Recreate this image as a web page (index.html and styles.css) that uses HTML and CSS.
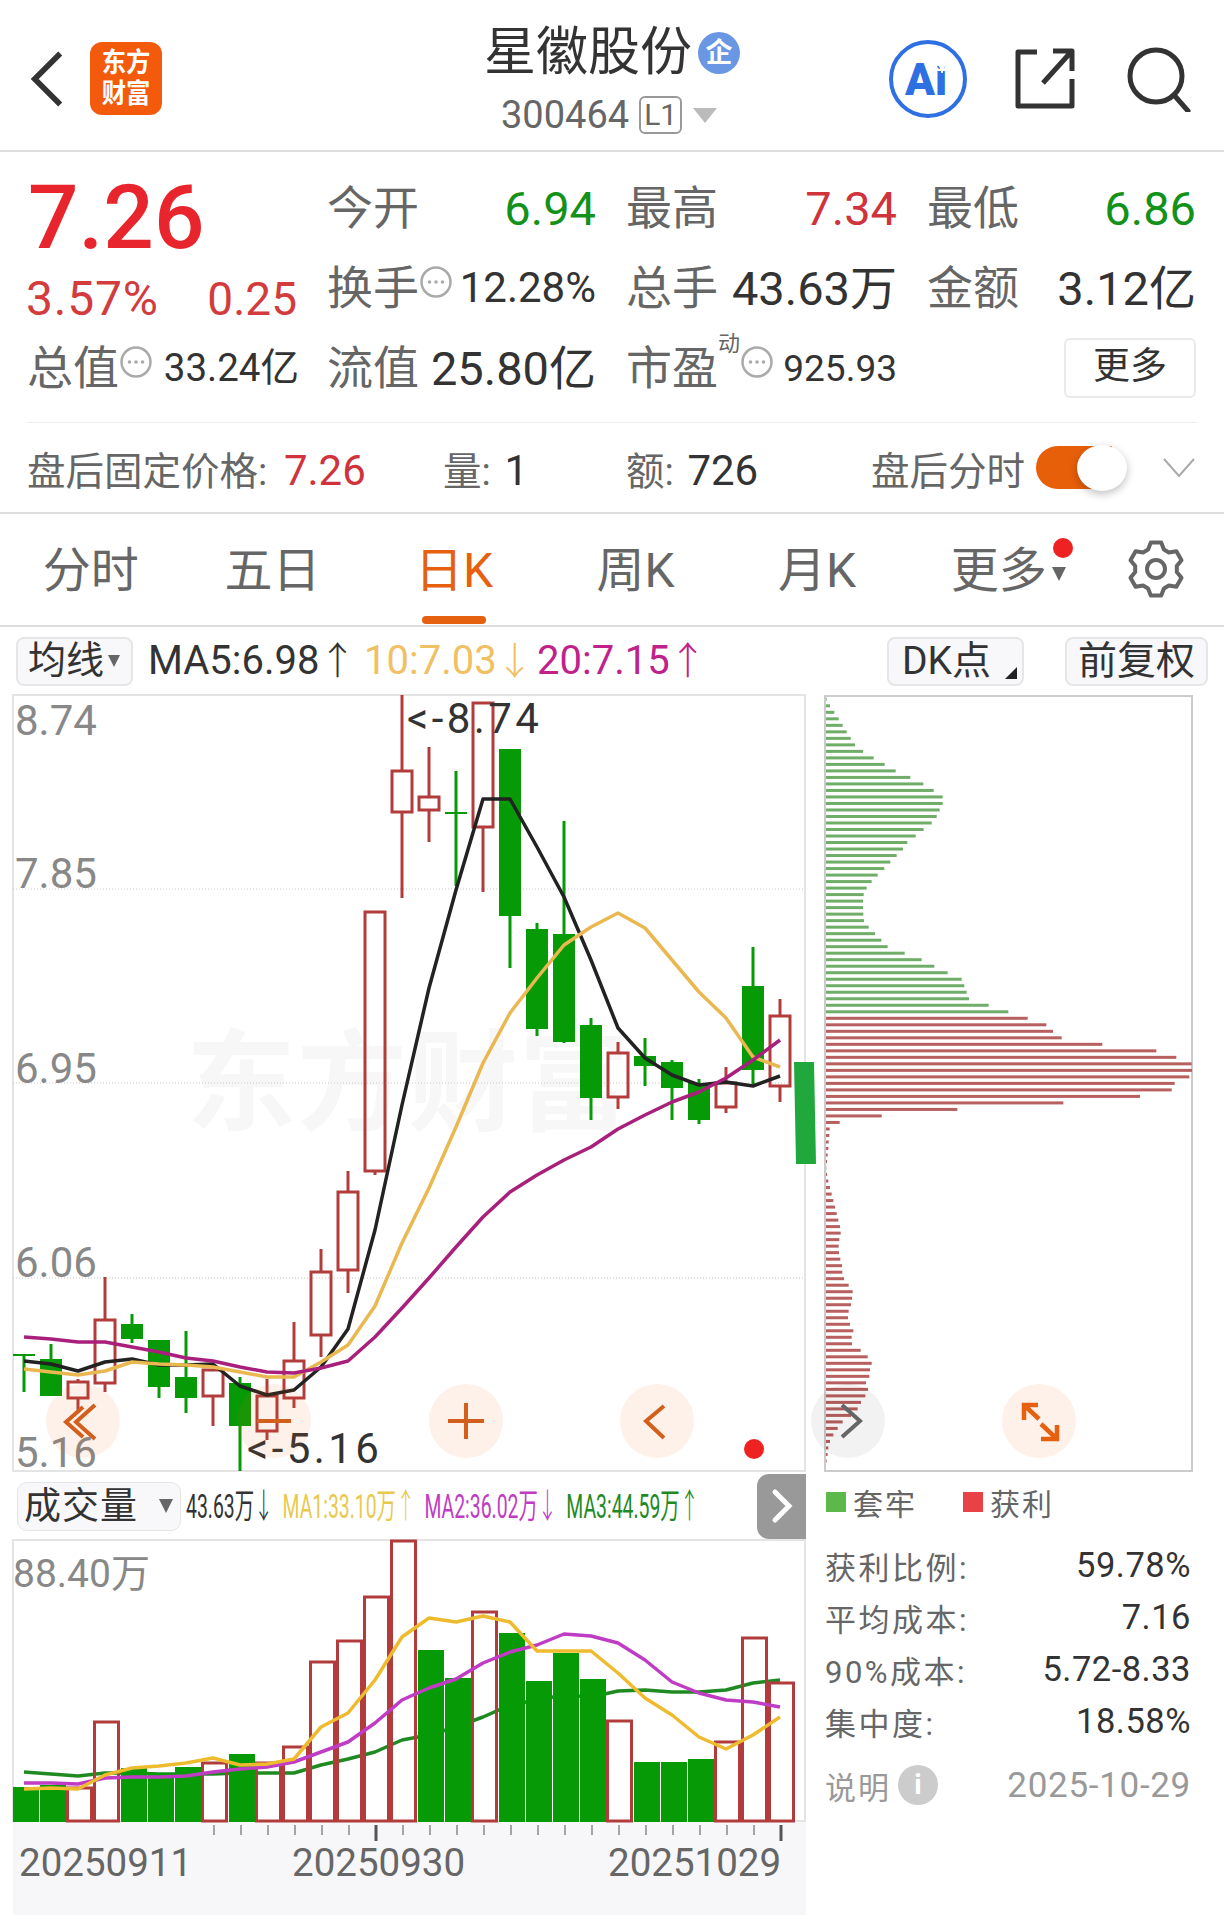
FILE: index.html
```html
<!DOCTYPE html>
<html lang="zh-CN">
<head>
    <meta charset="utf-8">
    <title>星徽股份 300464</title>
    <link rel="stylesheet" href="styles.css">
</head>
<body>
    <header class="topbar">
        <svg class="back" viewBox="0 0 36 60"><path d="M32 3 L5 30 L32 57"/></svg>
        <div class="logo"><span>东方</span><span>财富</span></div>
        <div class="title">
            <div class="name">星徽股份<span class="badge">企</span></div>
            <div class="code">300464<span class="level">L1</span><i class="caret"></i></div>
        </div>
        <svg class="ai" viewBox="0 0 80 80">
            <circle cx="40" cy="40" r="37"/>
            <text x="38" y="56">Ai</text>
            <path class="spark" d="M54 15 L56.5 22 L63 24.5 L56.5 27 L54 34 L51.500 27 L45 24.5 L51.500 22 Z"/>
        </svg>
        <svg class="share" viewBox="0 0 62 64"><path d="M24 5 H5 V59 H59 V32"/><path d="M30 36 L58 5 M40 4 H59 V24"/></svg>
        <svg class="search" viewBox="0 0 66 66"><circle cx="31" cy="30" r="26"/><path d="M49 49 L63 65"/></svg>
    </header>

    <section class="quote">
        <div class="price-box">
            <div class="price">7.26</div>
            <div class="change"><span class="pct">3.57%</span><span>0.25</span></div>
        </div>
        <div class="cell"><span class="lbl">今开</span><span class="val down">6.94</span></div>
        <div class="cell"><span class="lbl">最高</span><span class="val up">7.34</span></div>
        <div class="cell"><span class="lbl">最低</span><span class="val down">6.86</span></div>

        <div class="cell"><span class="lbl">换手<svg class="tip" viewBox="0 0 32 32"><use href="#tip"/></svg></span><span class="val wide">12.28%</span></div>
        <div class="cell"><span class="lbl">总手</span><span class="val">43.63万</span></div>
        <div class="cell"><span class="lbl">金额</span><span class="val">3.12亿</span></div>

        <div class="cell"><span class="lbl">总值<svg class="tip" viewBox="0 0 32 32"><use href="#tip"/></svg></span><span class="val small">33.24亿</span></div>
        <div class="cell"><span class="lbl">流值</span><span class="val">25.80亿</span></div>
        <div class="cell"><span class="lbl">市盈<sup>动</sup><svg class="tip" viewBox="0 0 32 32"><use href="#tip"/></svg></span><span class="val tight">925.93</span></div>
        <div class="cell"><span class="more-btn">更多</span></div>
    </section>

    <svg class="defs" width="0" height="0">
        <symbol id="tip" viewBox="0 0 32 32">
            <circle cx="16" cy="16" r="14.500" fill="none" stroke="#aaa" stroke-width="2.500"/>
            <circle cx="9.500" cy="16" r="1.800" fill="#aaa"/>
            <circle cx="16" cy="16" r="1.800" fill="#aaa"/>
            <circle cx="22.500" cy="16" r="1.800" fill="#aaa"/>
        </symbol>
    </svg>

    <section class="after">
        <div class="after-item">盘后固定价格: <b class="up">7.26</b></div>
        <div class="after-item">量: <b>1</b></div>
        <div class="after-item">额: <b>726</b></div>
        <div class="after-item after-switch">
            盘后分时
            <span class="toggle"></span>
            <svg class="fold" viewBox="0 0 32 20"><path d="M1 1 L16 18 L31 1"/></svg>
        </div>
    </section>

    <nav class="tabs">
        <a>分时</a>
        <a>五日</a>
        <a class="active">日K</a>
        <a>周K</a>
        <a>月K</a>
        <a class="more">更多<i class="caret dark"></i><i class="dot"></i></a>
        <svg class="gear" viewBox="0 0 56 60"><path id="gearPath"/><circle cx="28" cy="30" r="9"/></svg>
    </nav>

    <div class="ma-bar">
        <span class="pick ma-pick">均线<i class="caret dark small"></i></span>
        <span class="ma black">MA5:6.98<em>↑</em></span>
        <span class="ma yellow">10:7.03<em>↓</em></span>
        <span class="ma pink">20:7.15<em>↑</em></span>
        <span class="pick dk">DK点<i class="corner"></i></span>
        <span class="pick adj">前复权</span>
    </div>

    <main class="charts">
        <div class="col-left">
            <svg id="kline" class="kline" width="793" height="777" viewBox="13 695 793 777"></svg>
            <div class="vol-bar">
                <span class="pick vol-pick">成交量<i class="caret dark"></i></span>
                <div class="vol-ma">
                    <span class="black">43.63万<em>↓</em></span>
                    <span class="gold">MA1:33.10万<em>↑</em></span>
                    <span class="violet">MA2:36.02万<em>↓</em></span>
                    <span class="green">MA3:44.59万<em>↑</em></span>
                </div>
                <span class="next"><svg viewBox="0 0 24 36"><path d="M5 4 L19 18 L5 32"/></svg></span>
            </div>
            <svg id="volume" class="volume" width="793" height="282" viewBox="13 1540 793 282"></svg>
            <div class="dates">
                <svg id="ticks" class="ticks" width="793" height="19" viewBox="13 1822 793 19"></svg>
                <div class="date-row"><span>20250911</span><span>20250930</span><span>20251029</span></div>
            </div>
        </div>

        <aside class="col-right">
            <svg id="chips" class="chips" width="369" height="777" viewBox="824 695 369 777"></svg>
            <div class="legend">
                <span><i class="sq trapped"></i>套牢</span>
                <span><i class="sq profit"></i>获利</span>
            </div>
            <dl class="stats">
                <div><dt>获利比例:</dt><dd>59.78%</dd></div>
                <div><dt>平均成本:</dt><dd>7.16</dd></div>
                <div><dt>90%成本:</dt><dd>5.72-8.33</dd></div>
                <div><dt>集中度:</dt><dd>18.58%</dd></div>
            </dl>
            <div class="note">
                <span class="note-lbl">说明<i class="info">i</i></span>
                <span>2025-10-29</span>
            </div>
        </aside>

        <div class="float-btns">
            <button><svg viewBox="0 0 74 74"><path d="M37 23 L20 38 L37 53 M49 21 L30 38 L49 55"/></svg></button>
            <button><svg viewBox="0 0 74 74"><path d="M20 37 H54"/></svg></button>
            <button><svg viewBox="0 0 74 74"><path d="M19 37 H55 M37 19 V55"/></svg></button>
            <button><svg viewBox="0 0 74 74"><path d="M44 22 L26 37 L44 54"/></svg></button>
            <button class="grey"><svg viewBox="0 0 74 74"><path d="M31 21 L49 37 L31 53"/></svg></button>
            <button class="bold"><svg viewBox="0 0 74 74"><path d="M36 21 H22 V36 M23 22 L37 35 M39 40 L55 55 M39 55 H55 V41"/></svg></button>
        </div>
    </main>

    <script src="chart.js"></script>
</body>
</html>
```

FILE: styles.css
```css
* {
    box-sizing: border-box;
}
body {
    margin: 0;
    width: 1224px;
    background: #fff;
    color: #333;
    font-family: Roboto, "Noto Sans CJK SC", sans-serif;
}
svg {
    display: block;
}
i, em {
    font-style: normal;
}

/* top bar */
.topbar {
    display: flex;
    align-items: center;
    height: 152px;
    border-bottom: 2px solid #ddd;
    padding: 7px 0 0 30px;
    position: relative;
}
.back {
    width: 34px;
    height: 58px;
    fill: none;
    stroke: #333;
    stroke-width: 6;
}
.logo {
    width: 72px;
    height: 73px;
    margin-left: 26px;
    border-radius: 12px;
    background: #f45a0c;
    color: #fff;
    font-size: 27px;
    font-weight: 700;
    line-height: 31px;
    display: flex;
    flex-direction: column;
    align-items: center;
    justify-content: center;
}
.logo span {
    transform: scaleX(.9);
}
.title {
    width: 300px;
    margin-left: 322px;
    margin-right: 104px;
    color: #333;
}
.name {
    display: flex;
    align-items: center;
    font-size: 52px;
    line-height: 62px;
    color: #333;
}
.badge {
    width: 42px;
    height: 42px;
    margin-left: 6px;
    border-radius: 50%;
    background: #6a97e4;
    color: #fff;
    font-size: 27px;
    font-weight: 700;
    line-height: 42px;
    text-align: center;
}
.code {
    display: flex;
    align-items: center;
    margin-top: 11px;
    margin-left: 17px;
    font-size: 38px;
    line-height: 40px;
    color: #666;
}
.level {
    margin-left: 10px;
    width: 43px;
    height: 38px;
    border: 2px solid #999;
    border-radius: 6px;
    font-size: 30px;
    line-height: 34px;
    text-align: center;
}
.caret {
    display: inline-block;
    margin-left: 11px;
    border-left: 12px solid transparent;
    border-right: 12px solid transparent;
    border-top: 15px solid #bbb;
}
.caret.dark {
    margin-left: 8px;
    border-left-width: 7px;
    border-right-width: 7px;
    border-top: 14px solid #666;
}
.caret.small {
    margin-left: 4px;
    border-left-width: 6px;
    border-right-width: 6px;
    border-top-width: 12px;
}
.ai {
    width: 80px;
    height: 80px;
    margin-right: 45px;
}
.ai circle {
    fill: none;
    stroke: #2e6fe2;
    stroke-width: 4;
}
.ai text {
    fill: #2e6fe2;
    font-size: 44px;
    font-weight: 900;
    text-anchor: middle;
}
.ai .spark {
    fill: #fff;
    stroke: #fff;
}
.share {
    width: 62px;
    height: 64px;
    margin-right: 50px;
    fill: none;
    stroke: #333;
    stroke-width: 5;
    stroke-linejoin: round;
}
.search {
    width: 66px;
    height: 66px;
    fill: none;
    stroke: #333;
    stroke-width: 5;
    stroke-linecap: round;
}

/* quote table */
.quote {
    display: grid;
    grid-template-columns: 270px 269px 271px 269px;
    grid-auto-rows: 80px;
    column-gap: 30px;
    margin: 0 27px;
    padding: 16px 0 14px;
    border-bottom: 1px solid #eee;
    height: 271px;
}
.price-box {
    grid-row: span 2;
    padding-left: 1px;
}
.price {
    font-size: 89px;
    font-weight: 500;
    line-height: 100px;
    color: #e8242c;
}
.change {
    display: flex;
    justify-content: space-between;
    font-size: 46px;
    line-height: 64px;
    margin-top: -1px;
    color: #d23c3c;
}
.pct {
    margin-left: -2px;
    font-size: 48px;
    letter-spacing: .8px;
}
.cell {
    display: flex;
    align-items: center;
    justify-content: space-between;
}
.lbl {
    display: flex;
    align-items: center;
    margin-top: -8px;
    font-size: 46px;
    color: #666;
    position: relative;
}
.lbl sup {
    font-size: 22px;
    line-height: 1;
    align-self: flex-start;
    margin-top: 2px;
}
.tip {
    width: 32px;
    height: 32px;
    margin-left: 1px;
    margin-top: -4px;
}
.val {
    font-size: 47px;
    line-height: 1;
    color: #333;
    white-space: nowrap;
}
.val.wide {
    font-size: 42px;
}
.val.small {
    margin-right: -2px;
    font-size: 38.500px;
}
.val.tight {
    font-size: 37px;
}
.val.up, .up {
    color: #d0333c;
}
.val.down {
    color: #12921a;
}
.more-btn {
    margin-left: auto;
    width: 132px;
    height: 60px;
    border: 2px solid #eaeaea;
    border-radius: 6px;
    font-size: 37px;
    line-height: 54px;
    text-align: center;
}

/* after-hours row */
.after {
    display: grid;
    grid-template-columns: 416px 183px 245px 1fr;
    align-items: center;
    height: 91px;
    padding-left: 27px;
    border-bottom: 2px solid #ddd;
    font-size: 38.500px;
    color: #666;
}
.after-item b {
    margin-left: 4px;
    font-weight: 400;
    font-size: 42px;
    color: #333;
}
.after-item b.up {
    margin-left: 7px;
    color: #d0333c;
}
.after-switch {
    display: flex;
    align-items: center;
}
.toggle {
    position: relative;
    width: 76px;
    height: 43px;
    margin-left: 11px;
    border-radius: 22px 0 0 22px;
    background: #e85f0a;
}
.toggle::after {
    content: "";
    position: absolute;
    left: 41px;
    top: -1px;
    width: 50px;
    height: 46px;
    border-radius: 50%;
    background: #fff;
    box-shadow: 0 3px 8px rgba(0, 0, 0, .25);
}
.fold {
    width: 32px;
    height: 20px;
    margin-left: 51px;
    fill: none;
    stroke: #aaa;
    stroke-width: 2;
}

/* period tabs */
.tabs {
    display: grid;
    grid-template-columns: repeat(6, 181.600px) 1fr;
    align-items: center;
    height: 113px;
    padding-top: 2px;
    border-bottom: 2px solid #ddd;
    font-size: 48px;
    color: #666;
    text-align: center;
}
.tabs a {
    position: relative;
    line-height: 60px;
}
.tabs .active {
    color: #e5610f;
}
.tabs .active::after {
    content: "";
    position: absolute;
    left: 59px;
    bottom: -23px;
    width: 64px;
    height: 8px;
    border-radius: 4px;
    background: #e5610f;
}
.tabs .more .caret {
    position: absolute;
    top: 26px;
    left: 144px;
    margin: 0;
}
.tabs .dot {
    position: absolute;
    left: 145px;
    top: -3px;
    width: 20px;
    height: 20px;
    border-radius: 50%;
    background: #ee2222;
}
.gear {
    width: 56px;
    height: 60px;
    margin-left: 38px;
    margin-top: -4px;
    fill: none;
    stroke: #666;
    stroke-width: 4;
    stroke-linejoin: round;
}

/* moving average bar */
.ma-bar {
    display: flex;
    align-items: center;
    height: 68px;
    padding: 0 16px;
    font-size: 40px;
    white-space: nowrap;
}
.pick {
    display: flex;
    align-items: center;
    position: relative;
    height: 49px;
    padding: 0 12px 9px;
    border: 2px solid #e6e6e8;
    border-radius: 8px;
    background: #f8f8fa;
    font-size: 39px;
    color: #333;
}
.ma-pick {
    width: 117px;
    padding-left: 10px;
    padding-right: 0;
    font-size: 38px;
}
.ma-pick .caret {
    margin-top: 8px;
}
.ma {
    margin-left: 15px;
    margin-top: -8px;
}
.ma em {
    font-family: "Noto Sans CJK SC", sans-serif;
    font-size: 38px;
    font-weight: 300;
    margin-left: -1px;
}
.ma.black {
    width: 201px;
}
.ma.yellow {
    width: 158px;
}
.black {
    color: #333;
}
.yellow {
    color: #f0c064;
}
.pink {
    color: #c0228a;
}
.dk {
    margin-left: auto;
    width: 137px;
    padding-left: 13px;
    padding-right: 0;
}
.corner {
    position: absolute;
    right: 5px;
    bottom: 5px;
    border-left: 12px solid transparent;
    border-bottom: 12px solid #222;
}
.adj {
    margin-left: 41px;
    width: 143px;
    padding-left: 11px;
    padding-right: 0;
}

/* chart columns */
.charts {
    position: relative;
    display: grid;
    grid-template-columns: 793px 369px;
    column-gap: 18px;
    padding-left: 13px;
}
.kline, .volume, .chips {
    overflow: visible;
}
.vol-bar {
    display: flex;
    align-items: center;
    height: 68px;
    font-size: 34px;
    white-space: nowrap;
}
.vol-pick {
    width: 164px;
    margin-left: 4px;
    padding: 0 7px 6px 6px;
    border-width: 1.500px;
    border-radius: 10px;
    font-size: 37px;
    letter-spacing: 1px;
    justify-content: space-between;
}
.vol-pick .caret {
    margin-left: 0;
    margin-top: 6px;
}
.vol-ma {
    display: flex;
    gap: 16px;
    width: 509px;
    margin-left: 5px;
    margin-top: -6px;
    transform: scaleX(.57);
    transform-origin: 0 50%;
}
.vol-ma em {
    font-family: "Noto Sans CJK SC", sans-serif;
    font-weight: 300;
}
.gold {
    color: #e8c94e;
}
.violet {
    color: #c03cc4;
}
.green {
    color: #1f8a22;
}
.next {
    margin-left: auto;
    width: 49px;
    height: 65px;
    border-radius: 12px 0 0 12px;
    background: #999;
    display: flex;
    align-items: center;
    justify-content: center;
}
.next svg {
    width: 24px;
    height: 36px;
    fill: none;
    stroke: #fff;
    stroke-width: 5;
    stroke-linecap: round;
}
.dates {
    height: 93px;
    background: #f7f7f9;
}
.date-row {
    display: grid;
    grid-template-columns: 273px 316px auto;
    padding-left: 6px;
    font-size: 38.500px;
    line-height: 44px;
    color: #666;
}

/* chip distribution column */
.legend {
    display: flex;
    gap: 46px;
    height: 60px;
    align-items: center;
    padding-left: 2px;
    font-size: 30px;
    letter-spacing: 2px;
    color: #666;
}
.legend span {
    display: flex;
    align-items: center;
}
.sq {
    width: 20px;
    height: 20px;
    margin-right: 7px;
}
.trapped {
    background: #5cb84a;
}
.profit {
    background: #e84246;
}
.stats {
    margin: 7px 2px 0 1px;
}
.stats div {
    display: flex;
    justify-content: space-between;
    align-items: center;
    height: 52px;
}
.stats dt {
    font-size: 31px;
    letter-spacing: 2.500px;
    color: #666;
}
.stats dd {
    margin: 0;
    font-size: 34.500px;
    letter-spacing: .5px;
    color: #333;
}
.note {
    display: flex;
    justify-content: space-between;
    align-items: center;
    height: 56px;
    margin: 10px 2px 0 1px;
    font-size: 35px;
    letter-spacing: .7px;
    color: #999;
}
.note-lbl {
    display: flex;
    align-items: center;
    font-size: 31px;
    letter-spacing: 2px;
}
.info {
    width: 40px;
    height: 40px;
    margin-left: 7px;
    border-radius: 50%;
    background: #ccc;
    color: #fff;
    font-size: 28px;
    font-weight: 700;
    line-height: 40px;
    text-align: center;
    letter-spacing: 0;
}

/* round buttons floating over the charts */
.float-btns {
    position: absolute;
    left: 46px;
    top: 689px;
    display: flex;
    gap: 117.300px;
}
.float-btns button {
    width: 74px;
    height: 74px;
    padding: 0;
    border: 0;
    border-radius: 50%;
    background: rgba(232, 95, 16, .09);
}
.float-btns svg {
    width: 74px;
    height: 74px;
    fill: none;
    stroke: #d2601c;
    stroke-width: 4;
}
.float-btns .grey {
    background: rgba(0, 0, 0, .05);
}
.float-btns .grey svg {
    stroke: #666;
}
.float-btns .bold svg {
    stroke: #e5610f;
    stroke-width: 4.500;
}
```

FILE: chart.js
```js
const NS = 'http://www.w3.org/2000/svg';
const RED = '#b23c3c';
const GREEN = '#069a06';

function add(parent, tag, attrs, text) {
    const node = document.createElementNS(NS, tag);
    for (const key in attrs) node.setAttribute(key, attrs[key]);
    if (text) node.textContent = text;
    parent.appendChild(node);
    return node;
}

function line(parent, x1, y1, x2, y2, stroke, width, extra) {
    return add(parent, 'line', Object.assign({ x1, y1, x2, y2, stroke, 'stroke-width': width }, extra));
}

function poly(parent, pts, stroke, width) {
    add(parent, 'polyline', {
        points: pts.map(p => p.join(',')).join(' '),
        fill: 'none',
        stroke,
        'stroke-width': width,
        'stroke-linejoin': 'round'
    });
}

// candles: [body top, body bottom, wick top, wick bottom, up?]
const candles = [
    [1354, 1356, 1354, 1392, 0], [1359, 1396, 1344, 1396, 0], [1382, 1398, 1379, 1413, 1],
    [1320, 1383, 1277, 1392, 1], [1324, 1339, 1314, 1343, 0], [1340, 1387, 1340, 1398, 0],
    [1377, 1398, 1331, 1413, 0], [1370, 1396, 1370, 1426, 1], [1383, 1426, 1377, 1471, 0],
    [1396, 1431, 1379, 1440, 1], [1361, 1398, 1322, 1408, 1], [1272, 1335, 1249, 1357, 1],
    [1192, 1270, 1171, 1293, 1], [912, 1171, 912, 1175, 1], [771, 812, 695, 898, 1],
    [797, 810, 747, 842, 1], [812, 814, 771, 886, 0], [703, 827, 702, 892, 1],
    [749, 916, 749, 968, 0], [929, 1029, 923, 1036, 0], [934, 1042, 821, 1043, 0],
    [1025, 1098, 1018, 1120, 0], [1053, 1097, 1042, 1109, 1], [1056, 1066, 1038, 1086, 0],
    [1062, 1088, 1060, 1120, 0], [1083, 1120, 1079, 1124, 0], [1083, 1107, 1067, 1113, 1],
    [986, 1070, 947, 1084, 0], [1016, 1086, 999, 1102, 1]
];

const ma5 = [1361, 1364, 1371, 1362, 1359, 1365, 1365, 1364, 1386, 1395, 1390, 1367, 1329, 1230, 1105, 988, 890, 799, 799, 847, 897, 960, 1028, 1058, 1075, 1085, 1082, 1086, 1076];
const ma10 = [1369, 1372, 1375, 1371, 1362, 1364, 1365, 1367, 1372, 1377, 1377, 1362, 1345, 1306, 1243, 1188, 1127, 1063, 1013, 978, 945, 927, 913, 928, 960, 992, 1018, 1057, 1067];
const ma20 = [1337, 1339, 1342, 1342, 1347, 1352, 1358, 1361, 1367, 1372, 1373, 1368, 1361, 1337, 1308, 1278, 1247, 1217, 1192, 1175, 1160, 1147, 1129, 1115, 1102, 1092, 1078, 1060, 1040];

function drawKline(svg) {
    add(svg, 'rect', { x: 13, y: 695, width: 792, height: 776, fill: 'none', stroke: '#e4e4e4', 'stroke-width': 2 });

    // faint brand mark behind the candles
    add(svg, 'text', { x: 186, y: 1122, 'font-size': 110, 'font-weight': 700, fill: '#f7f7f7', 'letter-spacing': 1 }, '东方财富');

    [889, 1083, 1278].forEach(y => line(svg, 13, y, 805, y, '#c8c8c8', 1, { 'stroke-dasharray': '1 2' }));

    candles.forEach((c, i) => {
        const x = 24 + 27 * i;
        const color = c[4] ? RED : GREEN;
        if (c[2] < c[0]) line(svg, x, c[2], x, c[0], color, 3);
        if (c[3] > c[1]) line(svg, x, c[1], x, c[3], color, 3);
        if (c[4]) {
            add(svg, 'rect', { x: x - 10, y: c[0], width: 20, height: c[1] - c[0], fill: 'none', stroke: color, 'stroke-width': 3 });
        } else {
            add(svg, 'rect', { x: x - 11, y: c[0], width: 22, height: c[1] - c[0], fill: color });
        }
    });

    // today's unfinished candle leans out past the frame
    add(svg, 'polygon', { points: '794,1062 814,1062 816,1164 796,1164', fill: '#21a83c' });

    const pts = list => list.map((y, i) => [24 + 27 * i, y]);
    poly(svg, pts(ma5), '#222', 3.5);
    poly(svg, pts(ma10), '#eab850', 3.5);
    poly(svg, pts(ma20), '#a8207c', 3.5);

    const axis = { 'font-size': 42, fill: '#888' };
    [['8.74', 735], ['7.85', 888], ['6.95', 1083], ['6.06', 1277], ['5.16', 1467]].forEach(([t, y]) => {
        add(svg, 'text', Object.assign({ x: 15, y }, axis), t);
    });
    const mark = { 'font-size': 42, fill: '#333', 'letter-spacing': 3.4 };
    add(svg, 'text', Object.assign({ x: 407, y: 733 }, mark), '<-8.74');
    add(svg, 'text', Object.assign({ x: 247, y: 1463 }, mark), '<-5.16');

    add(svg, 'circle', { cx: 754, cy: 1449, r: 10, fill: '#ee2222' });
}

// volume bars: [top, up?]
const volumes = [
    [1787, 0], [1785, 0], [1788, 1], [1722, 1], [1768, 0], [1773, 0], [1767, 0], [1763, 1],
    [1754, 0], [1763, 1], [1747, 1], [1662, 1], [1641, 1], [1597, 1], [1541, 1], [1650, 0],
    [1678, 0], [1612, 1], [1633, 0], [1681, 0], [1653, 0], [1679, 0], [1721, 1], [1762, 0],
    [1762, 0], [1759, 0], [1742, 1], [1638, 1], [1683, 1]
];

const vma1 = [1789, 1788, 1789, 1775, 1768, 1766, 1763, 1758, 1765, 1764, 1759, 1727, 1713, 1680, 1637, 1618, 1622, 1616, 1622, 1651, 1651, 1651, 1673, 1698, 1715, 1737, 1749, 1735, 1717];
const vma2 = [1783, 1783, 1784, 1778, 1777, 1777, 1776, 1772, 1769, 1767, 1762, 1752, 1742, 1723, 1700, 1688, 1679, 1663, 1652, 1645, 1634, 1636, 1643, 1660, 1682, 1693, 1700, 1702, 1707];
const vma3 = [1772, 1774, 1776, 1773, 1773, 1774, 1774, 1774, 1773, 1773, 1773, 1765, 1759, 1752, 1740, 1735, 1727, 1717, 1705, 1700, 1695, 1697, 1691, 1690, 1692, 1692, 1690, 1683, 1680];

function drawVolume(svg) {
    const pts = list => list.map((y, i) => [24 + 27 * i, y]);
    add(svg, 'rect', { x: 13, y: 1540, width: 792, height: 281, fill: 'none', stroke: '#e4e4e4', 'stroke-width': 2 });

    // the long average runs behind the bars
    poly(svg, pts(vma3), '#1f8a22', 3.5);

    volumes.forEach((v, i) => {
        const x = 13 + 27 * i;
        if (v[1]) {
            add(svg, 'rect', { x: x + 0.5, y: v[0], width: 24, height: 1821 - v[0], fill: 'none', stroke: RED, 'stroke-width': 3 });
        } else {
            add(svg, 'rect', { x: x, y: v[0], width: 26, height: 1822 - v[0], fill: GREEN });
        }
    });

    poly(svg, pts(vma2), '#c03cc4', 3.5);
    poly(svg, pts(vma1), '#efbb2e', 3.5);

    add(svg, 'text', { x: 13, y: 1587, 'font-size': 39, fill: '#888' }, '88.40万');
}

function drawTicks(svg) {
    for (let x = 214; x <= 782; x += 27) {
        const major = x === 376 || x === 781;
        line(svg, x, 1825, x, major ? 1841 : 1835, major ? '#555' : '#888', major ? 3 : 1.5);
    }
}

// chip bars, top to bottom; the first 49 sit above the current price
const chipWidths = [
    2, 12, 25, 38, 50, 62, 74, 87, 111, 143, 176, 209, 253, 292, 323, 350, 350, 341, 332, 317,
    293, 269, 244, 231, 212, 193, 175, 155, 137, 122, 113, 111, 111, 112, 114, 128, 147, 166, 185, 236,
    287, 325, 365, 407, 415, 422, 429, 488, 547,
    605, 661, 681, 707, 829, 991, 1051, 1097, 1098, 1090, 1046,
    1037, 942, 712, 394, 167, 41, 11, 10, 8, 7, 5, 3, 1, 3, 7, 12, 17, 22, 27, 32,
    37, 42, 44, 40, 38, 39, 43, 48, 49, 54, 68, 80, 78, 75, 68, 66, 72, 82, 77, 78,
    104, 125, 137, 132, 130, 120, 126, 118, 105, 95, 75, 50, 35, 22, 12, 7, 5, 2
];

function drawChips(svg) {
    add(svg, 'rect', { x: 825, y: 696, width: 367, height: 775, fill: 'none', stroke: '#cbcbcb', 'stroke-width': 2 });
    chipWidths.forEach((w, i) => {
        add(svg, 'rect', {
            x: 826,
            y: 699.3 + 6.51 * i - 1.5,
            width: w / 3,
            height: 3,
            fill: i < 49 ? '#6fad68' : '#b85f5f'
        });
    });
}

function gearPath() {
    const corners = [[21, -22], [27, -11], [27, 11], [21, 22]];
    let d = '';
    for (let k = 0; k < 6; k++) {
        corners.forEach(([r, off]) => {
            const a = (-90 + 60 * k + off) * Math.PI / 180;
            d += (d ? 'L' : 'M') + (28 + r * Math.cos(a)).toFixed(1) + ' ' + (30 + r * Math.sin(a)).toFixed(1);
        });
    }
    return d + 'Z';
}

drawKline(document.getElementById('kline'));
drawVolume(document.getElementById('volume'));
drawTicks(document.getElementById('ticks'));
drawChips(document.getElementById('chips'));
document.getElementById('gearPath').setAttribute('d', gearPath());
```
